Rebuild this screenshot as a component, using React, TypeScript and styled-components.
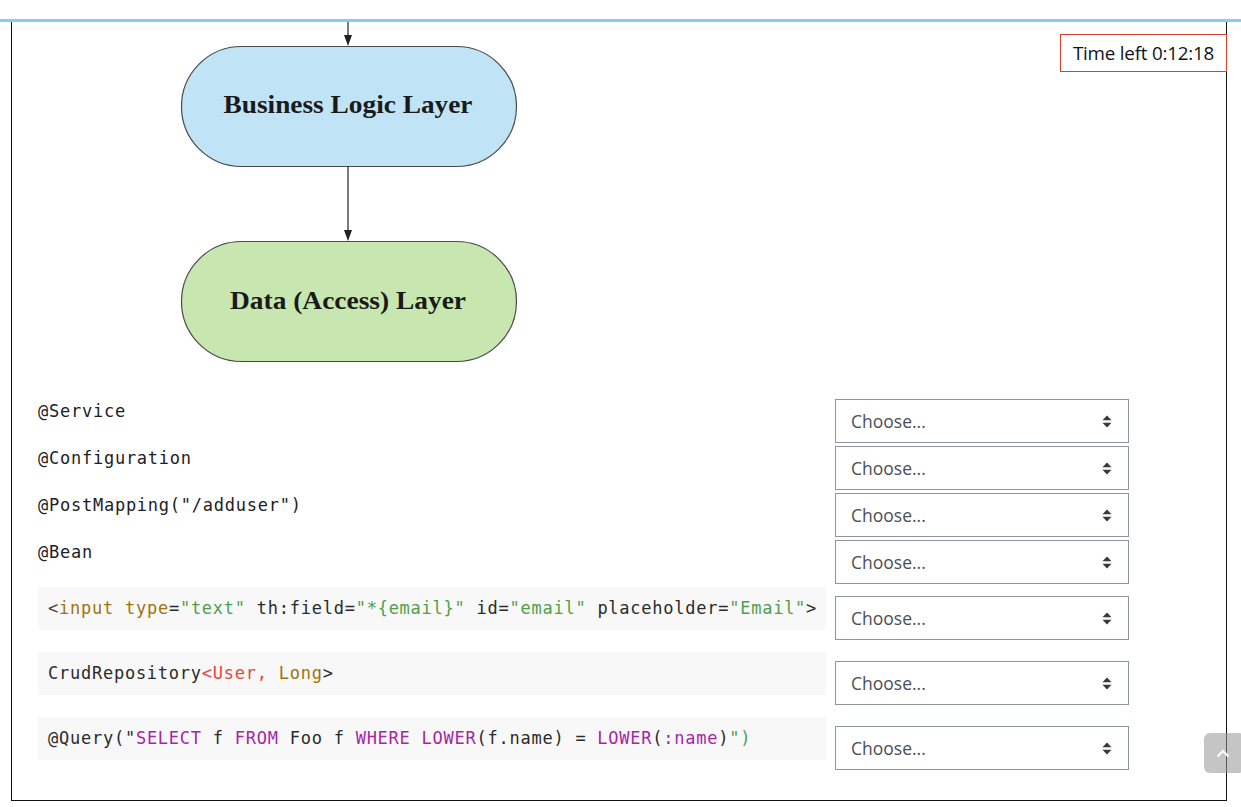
import React from "react";
import styled, { createGlobalStyle } from "styled-components";

const GlobalStyle = createGlobalStyle`
  html, body {
    margin: 0;
    padding: 0;
    background: #fff;
    overflow: hidden;
  }
  body {
    font-family: "Open Sans", "Noto Sans", sans-serif;
    color: #1d2125;
  }
`;

type Token = { t: string; c?: "brown" | "green" | "red" | "purple" | "gray" };

interface MatchRow {
  code?: Token[];
  label?: string;
}

const rows: MatchRow[] = [
  { label: "@Service" },
  { label: "@Configuration" },
  { label: '@PostMapping("/adduser")' },
  { label: "@Bean" },
  {
    code: [
      { t: "<", c: "gray" },
      { t: "input", c: "brown" },
      { t: " " },
      { t: "type", c: "brown" },
      { t: "=" },
      { t: '"text"', c: "green" },
      { t: " th:field=" },
      { t: '"*{email}"', c: "green" },
      { t: " id=" },
      { t: '"email"', c: "green" },
      { t: " placeholder=" },
      { t: '"Email"', c: "green" },
      { t: ">" },
    ],
  },
  {
    code: [
      { t: "CrudRepository" },
      { t: "<User, ", c: "red" },
      { t: "Long", c: "brown" },
      { t: ">" },
    ],
  },
  {
    code: [
      { t: '@Query("' },
      { t: "SELECT", c: "purple" },
      { t: " f " },
      { t: "FROM", c: "purple" },
      { t: " Foo f " },
      { t: "WHERE", c: "purple" },
      { t: " " },
      { t: "LOWER", c: "purple" },
      { t: "(f.name) = " },
      { t: "LOWER", c: "purple" },
      { t: "(" },
      { t: ":name", c: "purple" },
      { t: ")" },
      { t: '")', c: "green" },
    ],
  },
];

const tokenColors = {
  brown: "#a0740a",
  green: "#4f9f4a",
  red: "#e2483d",
  purple: "#a626a4",
  gray: "#444",
};

const App = () => {
  return (
    <>
      <GlobalStyle />
      <TopBar />
      <Page>
        <Question>
          <Diagram width="560" height="345" viewBox="0 0 560 345">
            <line x1="336" y1="0" x2="336" y2="16" stroke="#222" strokeWidth="1.2" />
            <polygon points="332,13 340,13 336,24" fill="#222" />
            <rect
              x="169.5"
              y="24.5"
              width="335"
              height="120"
              rx="60"
              fill="#c1e3f6"
              stroke="#4a4a4a"
              strokeWidth="1.2"
            />
            <DiagramText x="336" y="91" textAnchor="middle" textLength="249" lengthAdjust="spacingAndGlyphs">
              Business Logic Layer
            </DiagramText>
            <line x1="336" y1="144" x2="336" y2="211" stroke="#222" strokeWidth="1.2" />
            <polygon points="332,208 340,208 336,219" fill="#222" />
            <rect
              x="169.5"
              y="219.5"
              width="335"
              height="120"
              rx="60"
              fill="#c8e7b0"
              stroke="#4a4a4a"
              strokeWidth="1.2"
            />
            <DiagramText x="336" y="287" textAnchor="middle" textLength="236" lengthAdjust="spacingAndGlyphs">
              Data (Access) Layer
            </DiagramText>
          </Diagram>

          <Rows>
            {rows.map((row, i) => (
              <Row key={i} $code={!!row.code}>
                <LabelCell>
                  {row.code ? (
                    <CodeBlock>
                      {row.code.map((tok, j) => (
                        <Tok key={j} $color={tok.c ? tokenColors[tok.c] : undefined}>
                          {tok.t}
                        </Tok>
                      ))}
                    </CodeBlock>
                  ) : (
                    <Label>{row.label}</Label>
                  )}
                </LabelCell>
                <SelectWrap $code={!!row.code}>
                  <Select defaultValue="">
                    <option value="">Choose...</option>
                    <option value="1">Presentation Layer</option>
                    <option value="2">Business Logic Layer</option>
                    <option value="3">Data (Access) Layer</option>
                  </Select>
                  <SortIcon width="10" height="13" viewBox="0 0 10 13">
                    <polygon points="0.5,5.3 9.5,5.3 5,0.6" fill="#343a40" />
                    <polygon points="0.5,7.7 9.5,7.7 5,12.4" fill="#343a40" />
                  </SortIcon>
                </SelectWrap>
              </Row>
            ))}
          </Rows>
        </Question>
      </Page>

      <Timer>Time left 0:12:18</Timer>
      <BackToTop aria-label="Back to top">
        <svg width="14" height="9" viewBox="0 0 14 9">
          <polyline
            points="1.5,7.5 7,2 12.5,7.5"
            fill="none"
            stroke="#fff"
            strokeWidth="2.2"
          />
        </svg>
      </BackToTop>
    </>
  );
};

const TopBar = styled.div`
  height: 19px;
  background: #fff;
  border-bottom: 3px solid #82cdfb;
`;

const Page = styled.main`
  padding-left: 11px;
`;

const Question = styled.section`
  width: 1214px;
  border: 1px solid #111;
  border-top: none;
  padding-bottom: 18px;
`;

const Diagram = styled.svg`
  display: block;
`;

const DiagramText = styled.text`
  font-family: "Liberation Serif", "DejaVu Serif", serif;
  font-weight: bold;
  font-size: 25px;
  fill: #1a1a1a;
`;

const Rows = styled.div`
  margin-top: 32px;
  padding-left: 26px;
  display: flex;
  flex-direction: column;
`;

const Row = styled.div<{ $code: boolean }>`
  display: flex;
  align-items: flex-start;
  gap: 9px;
  height: ${(p) => (p.$code ? "65px" : "47px")};
`;

const LabelCell = styled.div`
  width: 788px;
  flex-shrink: 0;
`;

const Label = styled.div`
  font-family: "DejaVu Sans Mono", "Liberation Mono", monospace;
  font-size: 17px;
  letter-spacing: 0.75px;
  line-height: 24px;
  color: #1d2125;
  white-space: pre;
`;

const CodeBlock = styled.pre`
  margin: 0;
  height: 43px;
  box-sizing: border-box;
  padding: 9px 10px;
  background: #f8f8f8;
  font-family: "DejaVu Sans Mono", "Liberation Mono", monospace;
  font-size: 17px;
  letter-spacing: 0.75px;
  line-height: 25px;
  color: #383a42;
  white-space: pre;
  overflow: hidden;
`;

const Tok = styled.span<{ $color?: string }>`
  color: ${(p) => p.$color || "#2b2b2b"};
`;

const SelectWrap = styled.div<{ $code: boolean }>`
  position: relative;
  margin-top: ${(p) => (p.$code ? "9px" : "0")};
  width: 294px;
  height: 44px;
`;

const Select = styled.select`
  appearance: none;
  -webkit-appearance: none;
  width: 100%;
  height: 100%;
  box-sizing: border-box;
  border: 1px solid #8f959e;
  border-radius: 0;
  background: #fff;
  padding: 0 32px 0 15px;
  font-family: "Open Sans", "Noto Sans", sans-serif;
  font-size: 17.5px;
  color: #495057;
  outline: none;
`;

const SortIcon = styled.svg`
  position: absolute;
  right: 17px;
  top: 16px;
  pointer-events: none;
`;

const Timer = styled.div`
  position: fixed;
  top: 34px;
  left: 1060px;
  width: 167px;
  height: 38px;
  box-sizing: border-box;
  border: 1px solid #d9402c;
  background: #fff;
  display: flex;
  align-items: center;
  justify-content: center;
  font-family: "Open Sans", "Noto Sans", sans-serif;
  font-size: 18.8px;
  letter-spacing: -0.2px;
  color: #10131a;
  white-space: nowrap;
`;

const BackToTop = styled.button`
  position: fixed;
  left: 1204px;
  top: 733px;
  width: 41px;
  height: 40px;
  border: none;
  border-radius: 6px;
  background: rgba(150, 150, 150, 0.55);
  display: flex;
  align-items: center;
  justify-content: center;
  padding: 0 4px 0 0;
  cursor: pointer;
`;

export default App;
